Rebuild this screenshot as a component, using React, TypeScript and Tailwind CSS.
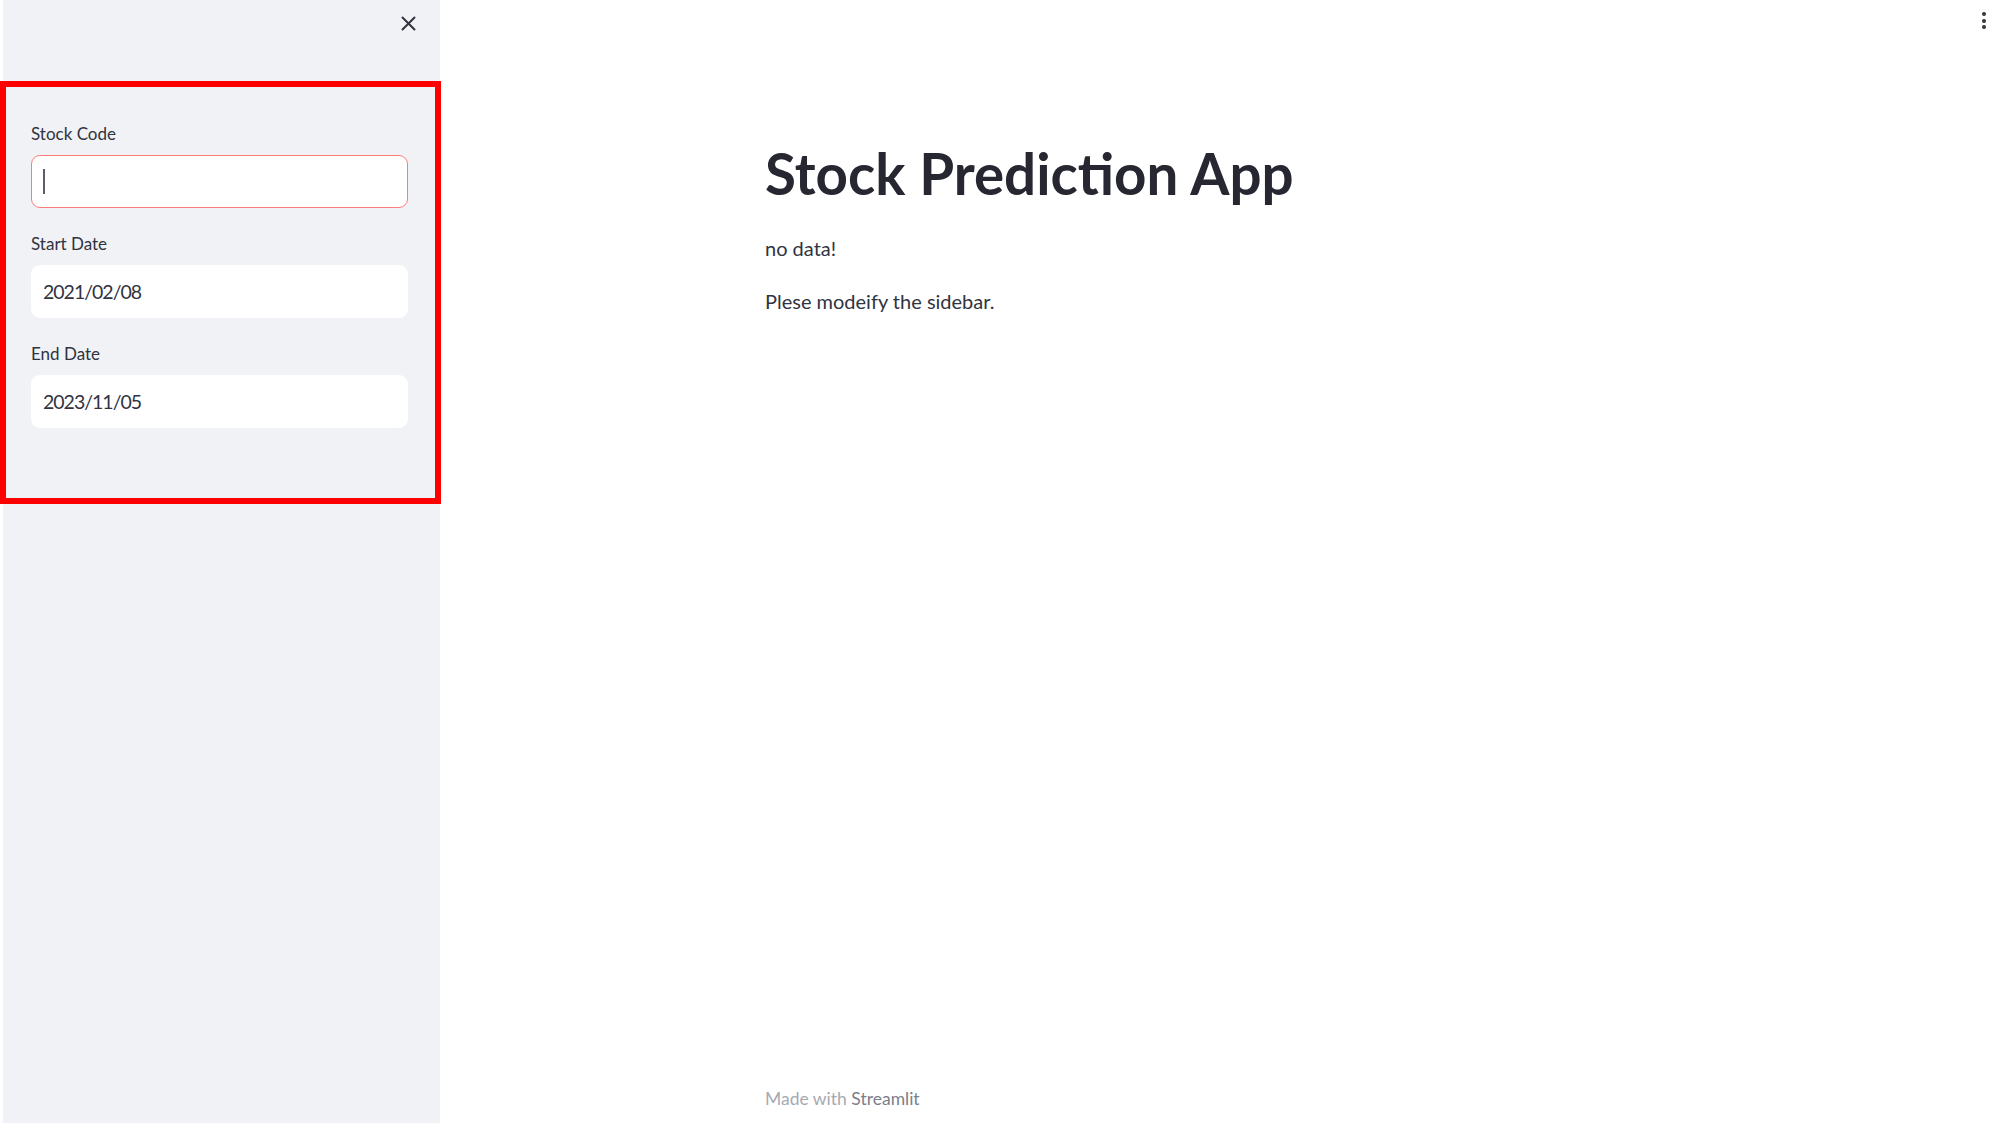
import React from "react";

function Field({ label, children }: { label: string; children: React.ReactNode }) {
  return (
    <div className="flex flex-col">
      <label className="h-[22px] text-[17px] leading-[22px] text-[#31333f]">{label}</label>
      <div className="mt-[10px]">{children}</div>
    </div>
  );
}

export default function App() {
  return (
    <div
      className="relative flex h-[1123px] w-[2003px] overflow-hidden bg-white pl-[3px] text-[#31333f]"
      style={{ fontFamily: "Lato, 'Open Sans', sans-serif" }}
    >
      <aside className="flex w-[437px] shrink-0 flex-col bg-[#f0f2f6]">
        <div className="flex justify-end pt-[16px] pr-[24px]">
          <svg width="15" height="15" viewBox="0 0 15 15" fill="none">
            <path d="M1.5 1.5 L13.5 13.5 M13.5 1.5 L1.5 13.5" stroke="#31333f" strokeWidth="2" strokeLinecap="round" />
          </svg>
        </div>
        <div className="mt-[92px] flex flex-col gap-[25px] pl-[28px] pr-[32px]">
          <Field label="Stock Code">
            <div className="flex h-[53px] items-center rounded-[9px] border-[1.5px] border-[#ff7b7b] bg-white pl-[11px]">
              <div className="h-[25px] w-[2px] bg-[#5b5d68]" />
            </div>
          </Field>
          <Field label="Start Date">
            <div className="flex h-[53px] items-center rounded-[9px] bg-white pl-[12px] text-[19.5px] tracking-[-1px]">2021/02/08</div>
          </Field>
          <Field label="End Date">
            <div className="flex h-[53px] items-center rounded-[9px] bg-white pl-[12px] text-[19.5px] tracking-[-1px]">2023/11/05</div>
          </Field>
        </div>
      </aside>

      <main className="flex flex-1 flex-col">
        <div className="flex h-[40px] justify-end pr-[17px] pt-[12px]">
          <div className="flex flex-col gap-[2.5px]">
            <span className="h-[4px] w-[4px] rounded-full bg-[#31333f]" />
            <span className="h-[4px] w-[4px] rounded-full bg-[#31333f]" />
            <span className="h-[4px] w-[4px] rounded-full bg-[#31333f]" />
          </div>
        </div>
        <div className="mx-auto flex w-[913px] flex-1 flex-col pt-[100px]">
          <h1 className="text-[56.5px] font-bold leading-[67px] text-[#262730]">Stock Prediction App</h1>
          <p className="mt-[25px] text-[20px] leading-[32px]">no data!</p>
          <p className="mt-[21px] text-[20px] leading-[32px]">Plese modeify the sidebar.</p>
          <div className="mt-auto pb-[13px] text-[17.5px] leading-[22px] text-[#a7a9b1]">
            Made with <span className="text-[#7b7e8b]">Streamlit</span>
          </div>
        </div>
      </main>

      <div className="pointer-events-none absolute left-0 top-[81px] h-[423px] w-[441px] border-[6px] border-[#ff0000]" />
    </div>
  );
}
